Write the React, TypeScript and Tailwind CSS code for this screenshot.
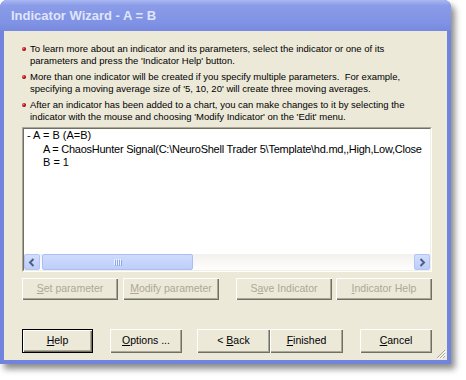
import React from "react";

const BTN =
  "h-full flex items-center justify-center bg-[#ece9d8] text-[10.5px] shadow-[inset_1px_1px_0_#ffffff,inset_-1px_-1px_0_#716f64,inset_-2px_-2px_0_#aca899]";
const BTN_DEF =
  "h-full flex items-center justify-center bg-[#ece9d8] text-[10.5px] border border-black shadow-[inset_1px_1px_0_#ffffff,inset_-1px_-1px_0_#716f64,inset_-2px_-2px_0_#aca899]";

const bullets: string[][] = [
  [
    "To learn more about an indicator and its parameters, select the indicator or one of its",
    "parameters and press the 'Indicator Help' button.",
  ],
  [
    "More than one indicator will be created if you specify multiple parameters.  For example,",
    "specifying a moving average size of '5, 10, 20' will create three moving averages.",
  ],
  [
    "After an indicator has been added to a chart, you can make changes to it by selecting the",
    "indicator with the mouse and choosing 'Modify Indicator' on the 'Edit' menu.",
  ],
];

function Arrow({ dir }: { dir: "l" | "r" }) {
  return (
    <div className="w-[16px] h-[16px] rounded-[2px] border border-[#b3c5f5] bg-[linear-gradient(#d3defd,#bccdf9)] flex items-center justify-center">
      <svg width="8" height="9" viewBox="0 0 8 9">
        <polyline
          points={dir === "l" ? "5.5,1 2,4.5 5.5,8" : "2.5,1 6,4.5 2.5,8"}
          fill="none"
          stroke="#4d6185"
          strokeWidth="2"
        />
      </svg>
    </div>
  );
}

export default function App() {
  return (
    <div className="w-[466px] h-[380px] bg-white font-['Liberation_Sans',Arial,sans-serif] text-black">
      <div className="w-[451px] h-[364px] bg-[#7184dd] rounded-t-[7px] flex flex-col shadow-[4px_5px_6px_rgba(0,0,0,0.45)]">
        <div className="h-[31px] rounded-t-[7px] bg-[linear-gradient(#aab8f2,#8a9be8_18%,#8092e4_75%,#7689df)] flex items-center pl-[11px]">
          <span className="text-[13px] font-bold text-[#dfe5fb] leading-none">
            Indicator Wizard - A = B
          </span>
        </div>
        <div className="mx-[4px] h-[329px] bg-[#ece9d8] relative flex flex-col">
          <div className="pt-[12px] pl-[18px] text-[9.5px] leading-[12px] flex flex-col gap-[4px]">
            {bullets.map((lines, i) => (
              <div key={i} className="flex">
                <div className="w-[4px] h-[4px] rounded-full mt-[4px] mr-[4px] shrink-0 bg-[radial-gradient(circle_at_35%_35%,#ff7070,#b00000_55%,#600000)]" />
                <div>
                  {lines.map((l, j) => (
                    <div key={j} className="whitespace-pre">
                      {l}
                    </div>
                  ))}
                </div>
              </div>
            ))}
          </div>

          <div className="ml-[18px] mt-[4px] w-[410px] h-[145px] border border-t-[#aca899] border-l-[#aca899] border-b-white border-r-white">
            <div className="w-full h-full border border-t-[#716f64] border-l-[#716f64] border-b-[#f1efe2] border-r-[#f1efe2] bg-white flex flex-col">
              <div className="flex-1 overflow-hidden text-[11px] leading-[13.5px] pl-[3px] whitespace-pre">
                <div>- A = B (A=B)</div>
                <div className="pl-[16px] tracking-[-0.25px]">
                  A = ChaosHunter Signal(C:\NeuroShell Trader 5\Template\hd.md,,High,Low,Close
                </div>
                <div className="pl-[16px]">B = 1</div>
              </div>
              <div className="h-[16px] flex bg-[linear-gradient(#f3f1ec,#fefefe)]">
                <Arrow dir="l" />
                <div className="ml-[2px] w-[151px] h-[16px] rounded-[2px] border border-[#a9bef4] bg-[linear-gradient(#cfdcfd,#bdcefa)] flex items-center justify-center gap-[1px]">
                  {[0, 1, 2, 3].map((k) => (
                    <div key={k} className="w-[1px] h-[6px] bg-[#eef3ff] shadow-[1px_1px_0_#8ea7e9]" />
                  ))}
                </div>
                <div className="ml-auto">
                  <Arrow dir="r" />
                </div>
              </div>
            </div>
          </div>

          <div className="mt-[6px] h-[22px] flex pl-[18px] text-[#aca899]">
            <div className={"w-[96px] " + BTN}>
              <span>
                <u>S</u>et parameter
              </span>
            </div>
            <div className={"ml-[5px] w-[96px] " + BTN}>
              <span>
                <u>M</u>odify parameter
              </span>
            </div>
            <div className={"ml-[17px] w-[96px] " + BTN}>
              <span>
                S<u>a</u>ve Indicator
              </span>
            </div>
            <div className={"ml-[4px] w-[96px] " + BTN}>
              <span>
                <u>I</u>ndicator Help
              </span>
            </div>
          </div>

          <div className="mt-[29px] h-[24px] flex pl-[18px]">
            <div className={"w-[71px] " + BTN_DEF}>
              <span>
                <u>H</u>elp
              </span>
            </div>
            <div className={"ml-[17px] w-[72px] " + BTN}>
              <span>
                <u>O</u>ptions ...
              </span>
            </div>
            <div className={"ml-[15px] w-[73px] " + BTN}>
              <span>
                &lt; <u>B</u>ack
              </span>
            </div>
            <div className={"w-[73px] " + BTN}>
              <span>
                <u>F</u>inished
              </span>
            </div>
            <div className={"ml-[17px] w-[72px] " + BTN}>
              <span>
                <u>C</u>ancel
              </span>
            </div>
          </div>

          <svg className="absolute right-[1px] bottom-[1px]" width="11" height="11" viewBox="0 0 11 11">
            <line x1="10" y1="2" x2="2" y2="10" stroke="#aca899" strokeWidth="1" />
            <line x1="11" y1="3" x2="3" y2="11" stroke="#ffffff" strokeWidth="1" />
            <line x1="10" y1="5" x2="5" y2="10" stroke="#aca899" strokeWidth="1" />
            <line x1="11" y1="6" x2="6" y2="11" stroke="#ffffff" strokeWidth="1" />
            <line x1="10" y1="8" x2="8" y2="10" stroke="#aca899" strokeWidth="1" />
          </svg>
        </div>
      </div>
    </div>
  );
}
